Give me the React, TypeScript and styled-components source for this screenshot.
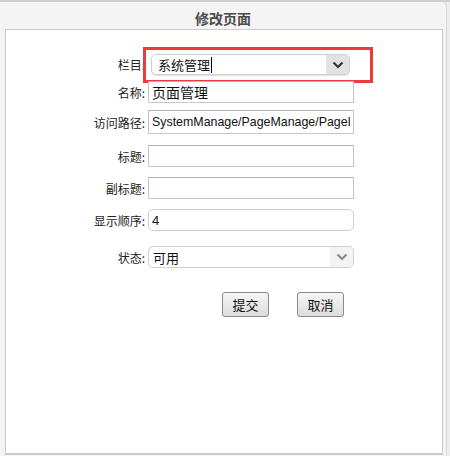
import React from 'react';
import styled, { createGlobalStyle } from 'styled-components';

const GlobalStyle = createGlobalStyle`
	html, body {
		margin: 0;
		padding: 0;
		background: #e6e6e6;
		font-family: 'Noto Sans CJK SC', 'Liberation Sans', sans-serif;
		overflow: hidden;
	}
`;

type FieldProps = {
	label: string;
	top: number;
	children: React.ReactNode;
};

const Field = ({ label, top, children }: FieldProps) => (
	<Row $top={top}>
		<Label>{label}:</Label>
		{children}
	</Row>
);

const Chevron = ({ color }: { color: string }) => (
	<svg width="12" height="8" viewBox="0 0 12 8">
		<path d="M1.5 1.5 L6 6 L10.5 1.5" fill="none" stroke={color} strokeWidth="2.2" />
	</svg>
);

export default function App() {
	return (
		<>
			<GlobalStyle />
			<Screen>
				<Dialog>
					<Header>修改页面</Header>
					<Panel>
						<Field label="栏目" top={26}>
							<Highlight>
								<SelectBox>
									<SelectValue>
										系统管理
										<Caret />
									</SelectValue>
									<ArrowButton $bg="#e2e2e2">
										<Chevron color="#333" />
									</ArrowButton>
								</SelectBox>
							</Highlight>
						</Field>
						<Field label="名称" top={8}>
							<TextInput defaultValue="页面管理" $size={14} />
						</Field>
						<Field label="访问路径" top={7}>
							<TextInput
								defaultValue="SystemManage/PageManage/PageIndex"
								$size={12.4}
								$height={24}
								$latin
							/>
						</Field>
						<Field label="标题" top={11}>
							<TextInput defaultValue="" />
						</Field>
						<Field label="副标题" top={10}>
							<TextInput defaultValue="" />
						</Field>
						<Field label="显示顺序" top={10}>
							<TextInput defaultValue="4" $size={13} $round $latin />
						</Field>
						<Field label="状态" top={15}>
							<SelectBox $round>
								<SelectValue $light>可用</SelectValue>
								<ArrowButton $bg="#f3f3f3">
									<Chevron color="#8a8a8a" />
								</ArrowButton>
							</SelectBox>
						</Field>
						<Buttons>
							<Button>提交</Button>
							<Button>取消</Button>
						</Buttons>
					</Panel>
				</Dialog>
				<Scroll />
			</Screen>
		</>
	);
}

const Screen = styled.div`
	display: flex;
	width: 450px;
	height: 456px;
	padding-top: 2px;
	box-sizing: border-box;
	background: linear-gradient(#cfcfcf 0 2px, #e6e6e6 2px);
`;

const Dialog = styled.div`
	display: flex;
	flex-direction: column;
	width: 447px;
	flex-shrink: 0;
	background: #f4f4f4;
	border-radius: 0 5px 0 0;
	border-right: 1px solid #d8d8d8;
	box-sizing: border-box;
`;

const Scroll = styled.div`
	flex: 1;
	background: #ececec;
`;

const Header = styled.div`
	height: 27px;
	line-height: 33px;
	text-align: center;
	font-size: 14px;
	font-weight: bold;
	color: #4a4a4a;
`;

const Panel = styled.div`
	flex: 1;
	margin: 0 3px 1px 5px;
	background: #fff;
	border: 1px solid #cbcbcb;
	border-bottom-width: 2px;
`;

const Row = styled.div<{ $top: number }>`
	display: flex;
	align-items: center;
	margin-top: ${(p) => p.$top}px;
`;

const Label = styled.span`
	width: 139px;
	margin-right: 3px;
	text-align: right;
	font-size: 12px;
	color: #222;
	white-space: nowrap;
`;

const TextInput = styled.input<{
	$size?: number;
	$height?: number;
	$round?: boolean;
	$latin?: boolean;
}>`
	box-sizing: border-box;
	width: 206px;
	height: ${(p) => p.$height ?? 22}px;
	padding: 0 3px;
	border: 1px solid ${(p) => (p.$round ? '#cfcfcf' : '#c6c6c6')};
	border-top-color: ${(p) => (p.$round ? '#cfcfcf' : '#b4b4b4')};
	border-radius: ${(p) => (p.$round ? '5px' : '1px')};
	font-family: ${(p) =>
		p.$latin
			? "'Liberation Sans', 'Noto Sans CJK SC', sans-serif"
			: "'Noto Sans CJK SC', sans-serif"};
	font-size: ${(p) => p.$size ?? 13}px;
	color: #111;
	outline: none;
	background: #fff;
`;

const Highlight = styled.div`
	display: flex;
	margin: -10px -1px -11px -5px;
	padding: 4px 20px 5px 5px;
	border: 3px solid #ec3b3f;
`;

const SelectBox = styled.div<{ $round?: boolean }>`
	display: flex;
	box-sizing: border-box;
	width: ${(p) => (p.$round ? 206 : 199)}px;
	height: ${(p) => (p.$round ? 22 : 21)}px;
	border: 1px solid #d0d0d0;
	border-radius: 5px;
	overflow: hidden;
	background: #fff;
	box-shadow: ${(p) => (p.$round ? 'none' : '0 1px 1px rgba(0,0,0,0.12)')};
`;

const SelectValue = styled.div<{ $light?: boolean }>`
	flex: 1;
	display: flex;
	align-items: center;
	padding-left: ${(p) => (p.$light ? 4 : 6)}px;
	font-size: 13px;
	color: #111;
`;

const Caret = styled.span`
	width: 1px;
	height: 16px;
	margin-left: 1px;
	background: #000;
`;

const ArrowButton = styled.div<{ $bg: string }>`
	display: flex;
	align-items: center;
	justify-content: center;
	width: 23px;
	background: ${(p) => p.$bg};
`;

const Buttons = styled.div`
	display: flex;
	gap: 28px;
	margin: 24px 0 0 216px;
`;

const Button = styled.button`
	width: 47px;
	height: 25px;
	padding: 0;
	border: 1px solid #8a8a8a;
	border-radius: 3px;
	background: linear-gradient(#f6f6f6, #dcdcdc);
	font-family: 'Noto Sans CJK SC', sans-serif;
	font-size: 13px;
	color: #111;
`;
